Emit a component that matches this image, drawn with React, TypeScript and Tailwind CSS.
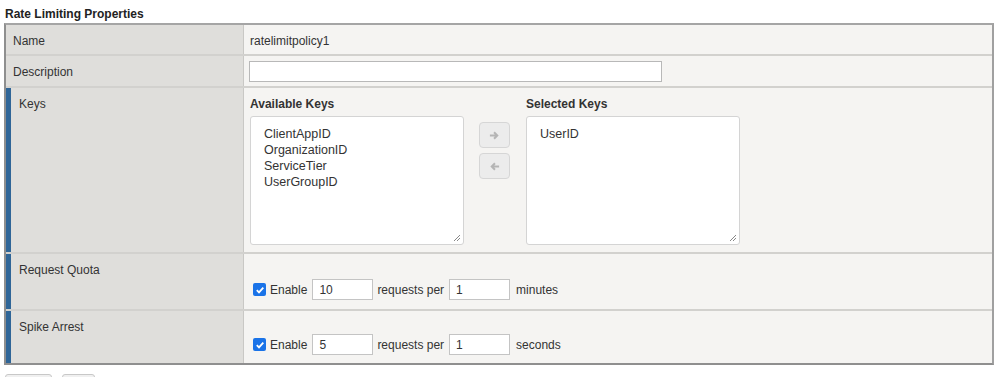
const font = { fontFamily: '"Liberation Sans", Arial, sans-serif' };

function Row({
  label,
  accent = false,
  h,
  last = false,
  children,
}: {
  label: string;
  accent?: boolean;
  h: string;
  last?: boolean;
  children?: React.ReactNode;
}) {
  return (
    <div className={`flex ${h} ${last ? "" : "border-b-2 border-[#d2d1ce]"}`}>
      <div className={`w-[238px] shrink-0 flex bg-[#dfdedb] border-r border-[#c9c8c5]`}>
        {accent && <div className="w-[5px] bg-[#2f6597]" />}
        <div className={`${accent ? "pl-[8px]" : "pl-[7px]"} pt-[7px] text-[12px] text-[#333]`}>{label}</div>
      </div>
      <div className="flex-1 bg-[#f5f4f2]">{children}</div>
    </div>
  );
}

function Arrow({ dir }: { dir: "right" | "left" }) {
  return (
    <button className="w-[31px] h-[26px] rounded-[4px] border border-[#d6d6d6] bg-[#ececec] flex items-center justify-center">
      <svg width="11" height="11" viewBox="0 0 12 12">
        {dir === "right" ? (
          <path d="M1 6h8M5.5 2.5L9 6l-3.5 3.5" stroke="#b5b5b5" strokeWidth="2.2" fill="none" />
        ) : (
          <path d="M11 6H3M6.5 2.5L3 6l3.5 3.5" stroke="#b5b5b5" strokeWidth="2.2" fill="none" />
        )}
      </svg>
    </button>
  );
}

function ListBox({ items }: { items: string[] }) {
  return (
    <div className="relative w-[214px] h-[129px] bg-white border border-[#d4d4d4] rounded-[3px] pl-[13px] pt-[9px] text-[12.5px] leading-[16px] text-[#333]">
      {items.map((i) => (
        <div key={i}>{i}</div>
      ))}
      <svg className="absolute right-[2px] bottom-[2px]" width="8" height="8" viewBox="0 0 8 8">
        <path d="M7 1L1 7M7 4L4 7" stroke="#888" strokeWidth="1" />
      </svg>
    </div>
  );
}

function Rate({ n, unit }: { n: string; unit: string }) {
  return (
    <div className="flex items-center pl-[9px] text-[12px] text-[#333]">
      <span className="w-[13px] h-[13px] rounded-[2px] bg-[#1a73e8] flex items-center justify-center">
        <svg width="10" height="10" viewBox="0 0 10 10">
          <path d="M1.8 5.2L4 7.4 8.3 2.6" stroke="white" strokeWidth="1.8" fill="none" />
        </svg>
      </span>
      <span className="ml-[4px]">Enable</span>
      <div className="ml-[5px] w-[61px] h-[21px] bg-white border border-[#c4c4c4] pl-[6px] flex items-center">{n}</div>
      <span className="ml-[4px]">requests per</span>
      <div className="ml-[5px] w-[61px] h-[21px] bg-white border border-[#c4c4c4] pl-[6px] flex items-center">1</div>
      <span className="ml-[6px]">{unit}</span>
    </div>
  );
}

export default function App() {
  return (
    <div className="w-[999px] h-[377px] overflow-hidden bg-white" style={font}>
      <div className="pl-[5px] pt-[5px] h-[23px] text-[12px] font-bold text-[#222]">Rate Limiting Properties</div>
      <div className="ml-[4px] w-[990px] border-2 border-[#8f8f8f] border-t-[#a5a5a5] border-r-[#a0a0a0]">
        <Row label="Name" h="h-[31px]">
          <div className="pl-[6px] pt-[7px] text-[12px] text-[#333]">ratelimitpolicy1</div>
        </Row>
        <Row label="Description" h="h-[32px]">
          <div className="pl-[5px] pt-[5px]">
            <div className="w-[413px] h-[21px] bg-white border border-[#b8b8b8]" />
          </div>
        </Row>
        <Row label="Keys" accent h="h-[166px]">
          <div className="flex pl-[6px] pt-[7px]">
            <div>
              <div className="text-[12px] font-bold text-[#333] h-[21px]">Available Keys</div>
              <ListBox items={["ClientAppID", "OrganizationID", "ServiceTier", "UserGroupID"]} />
            </div>
            <div className="flex flex-col gap-[5px] ml-[15px] mt-[27px]">
              <Arrow dir="right" />
              <Arrow dir="left" />
            </div>
            <div className="ml-[16px]">
              <div className="text-[12px] font-bold text-[#333] h-[21px]">Selected Keys</div>
              <ListBox items={["UserID"]} />
            </div>
          </div>
        </Row>
        <Row label="Request Quota" accent h="h-[57px]">
          <div className="pt-[25px]">
            <Rate n="10" unit="minutes" />
          </div>
        </Row>
        <Row label="Spike Arrest" accent h="h-[52px]" last>
          <div className="pt-[23px]">
            <Rate n="5" unit="seconds" />
          </div>
        </Row>
      </div>
      <div className="flex gap-[10px] ml-[5px] mt-[9px]">
        <div className="w-[47px] h-[24px] rounded-[3px] border border-[#c8c8c8] bg-[#f0f0f0]" />
        <div className="w-[33px] h-[24px] rounded-[3px] border border-[#c8c8c8] bg-[#f0f0f0]" />
      </div>
    </div>
  );
}
